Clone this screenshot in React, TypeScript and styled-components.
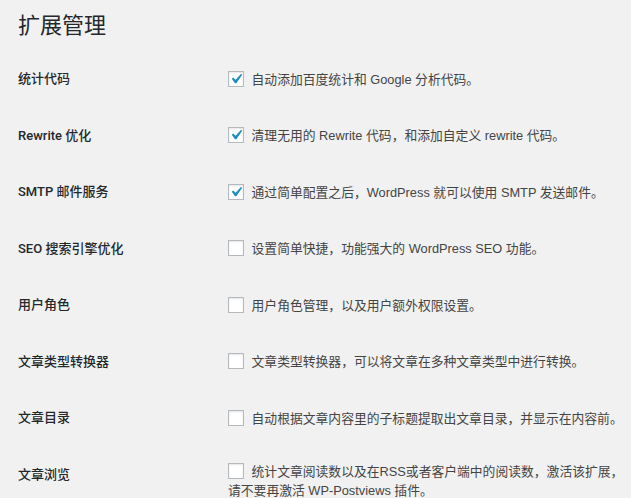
import styled, { createGlobalStyle } from "styled-components";

const GlobalStyle = createGlobalStyle`
    html, body {
        margin: 0;
        padding: 0;
        background: #f1f1f1;
    }
    body {
        font-family: "Liberation Sans", "Noto Sans CJK SC", sans-serif;
        color: #444;
    }
`;

const options = [
    { id: 1, label: "统计代码", text: "自动添加百度统计和 Google 分析代码。", checked: true },
    { id: 2, label: "Rewrite 优化", text: "清理无用的 Rewrite 代码，和添加自定义 rewrite 代码。", checked: true },
    { id: 3, label: "SMTP 邮件服务", text: "通过简单配置之后，WordPress 就可以使用 SMTP 发送邮件。", checked: true },
    { id: 4, label: "SEO 搜索引擎优化", text: "设置简单快捷，功能强大的 WordPress SEO 功能。", checked: false },
    { id: 5, label: "用户角色", text: "用户角色管理，以及用户额外权限设置。", checked: false },
    { id: 6, label: "文章类型转换器", text: "文章类型转换器，可以将文章在多种文章类型中进行转换。", checked: false },
    { id: 7, label: "文章目录", text: "自动根据文章内容里的子标题提取出文章目录，并显示在内容前。", checked: false },
    {
        id: 8,
        label: "文章浏览",
        text: "统计文章阅读数以及在RSS或者客户端中的阅读数，激活该扩展，请不要再激活 WP-Postviews 插件。",
        checked: false,
    },
];

const Wrap = styled.div`
    padding: 12px 3px 0 18px;
`;

const Title = styled.h1`
    margin: 0;
    padding: 0 0 4px;
    font-size: 22px;
    font-weight: 400;
    line-height: 28px;
    color: #23282d;
`;

const FormTable = styled.div`
    margin-top: 7px;
    display: flex;
    flex-direction: column;
`;

const Row = styled.div`
    display: grid;
    grid-template-columns: 210px 1fr;
`;

const Label = styled.div`
    align-self: start;
    padding: 20px 10px 20px 0;
    font-family: "Roboto", "Noto Sans CJK SC", sans-serif;
    font-size: 13px;
    line-height: 16.5px;
    font-weight: 500;
    color: #23282d;
`;

const Field = styled.div`
    align-self: center;
    padding: 15px 0;
    font-size: 12.8px;
    line-height: 19px;
    color: #444;
`;

const Box = styled.span`
    position: relative;
    display: inline-block;
    box-sizing: border-box;
    width: 16px;
    height: 16px;
    margin: -3px 4px 0 0;
    vertical-align: middle;
    border: 1px solid #b4b9be;
    background: #fff;
    box-shadow: inset 0 1px 2px rgba(0, 0, 0, 0.1);
`;

const Check = styled.svg`
    position: absolute;
    left: -3px;
    top: -3px;
    width: 20px;
    height: 20px;
`;

const Checkbox = ({ checked }: { checked: boolean }) => (
    <Box>
        {checked && (
            <Check viewBox="0 0 20 20">
                <path fill="#1e8cbe" d="M14.83 4.89l1.34.94-5.81 8.38H9.02L5.78 9.67l1.34-1.25 2.57 2.4z" />
            </Check>
        )}
    </Box>
);

const App = () => {
    return (
        <Wrap>
            <GlobalStyle />
            <Title>扩展管理</Title>
            <FormTable>
                {options.map((opt) => (
                    <Row key={opt.id}>
                        <Label>{opt.label}</Label>
                        <Field>
                            <Checkbox checked={opt.checked} /> {opt.text}
                        </Field>
                    </Row>
                ))}
            </FormTable>
        </Wrap>
    );
};

export default App;
